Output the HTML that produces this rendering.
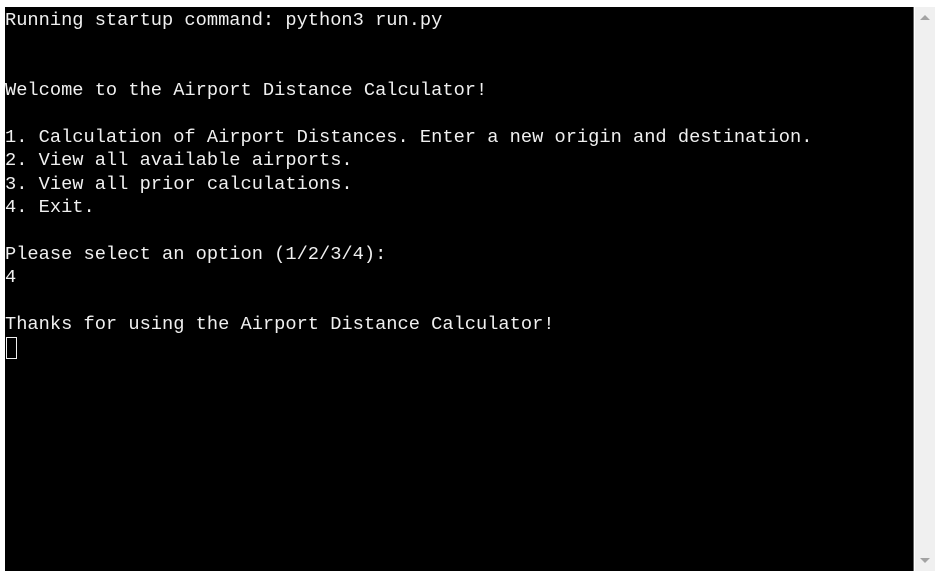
<!DOCTYPE html>
<html><head><style>
html,body{margin:0;padding:0;background:#fff;width:940px;height:577px;overflow:hidden}
#term{position:absolute;left:5px;top:7px;width:908px;height:564px;background:#000;border-right:1px solid #666}
pre{margin:0;padding:2px 0 0 0;font-family:"Liberation Mono",monospace;font-size:18.7px;line-height:23.4px;color:#f0f0f0;white-space:pre}
#cur{position:absolute;left:1px;top:330px;width:9px;height:20px;border:1px solid #f0f0f0}
#sb{position:absolute;left:915px;top:7px;width:20px;height:564px;background:#f0f0f0}
.up{position:absolute;left:5px;top:8px;width:0;height:0;border-left:5px solid transparent;border-right:5px solid transparent;border-bottom:5px solid #a3a3a3}
.dn{position:absolute;left:5px;bottom:8px;width:0;height:0;border-left:5px solid transparent;border-right:5px solid transparent;border-top:5px solid #a3a3a3}
</style></head><body>
<div id="term"><pre>Running startup command: python3 run.py


Welcome to the Airport Distance Calculator!

1. Calculation of Airport Distances. Enter a new origin and destination.
2. View all available airports.
3. View all prior calculations.
4. Exit.

Please select an option (1/2/3/4):
4

Thanks for using the Airport Distance Calculator!</pre><div id="cur"></div></div>
<div id="sb"><div class="up"></div><div class="dn"></div></div>
</body></html>
